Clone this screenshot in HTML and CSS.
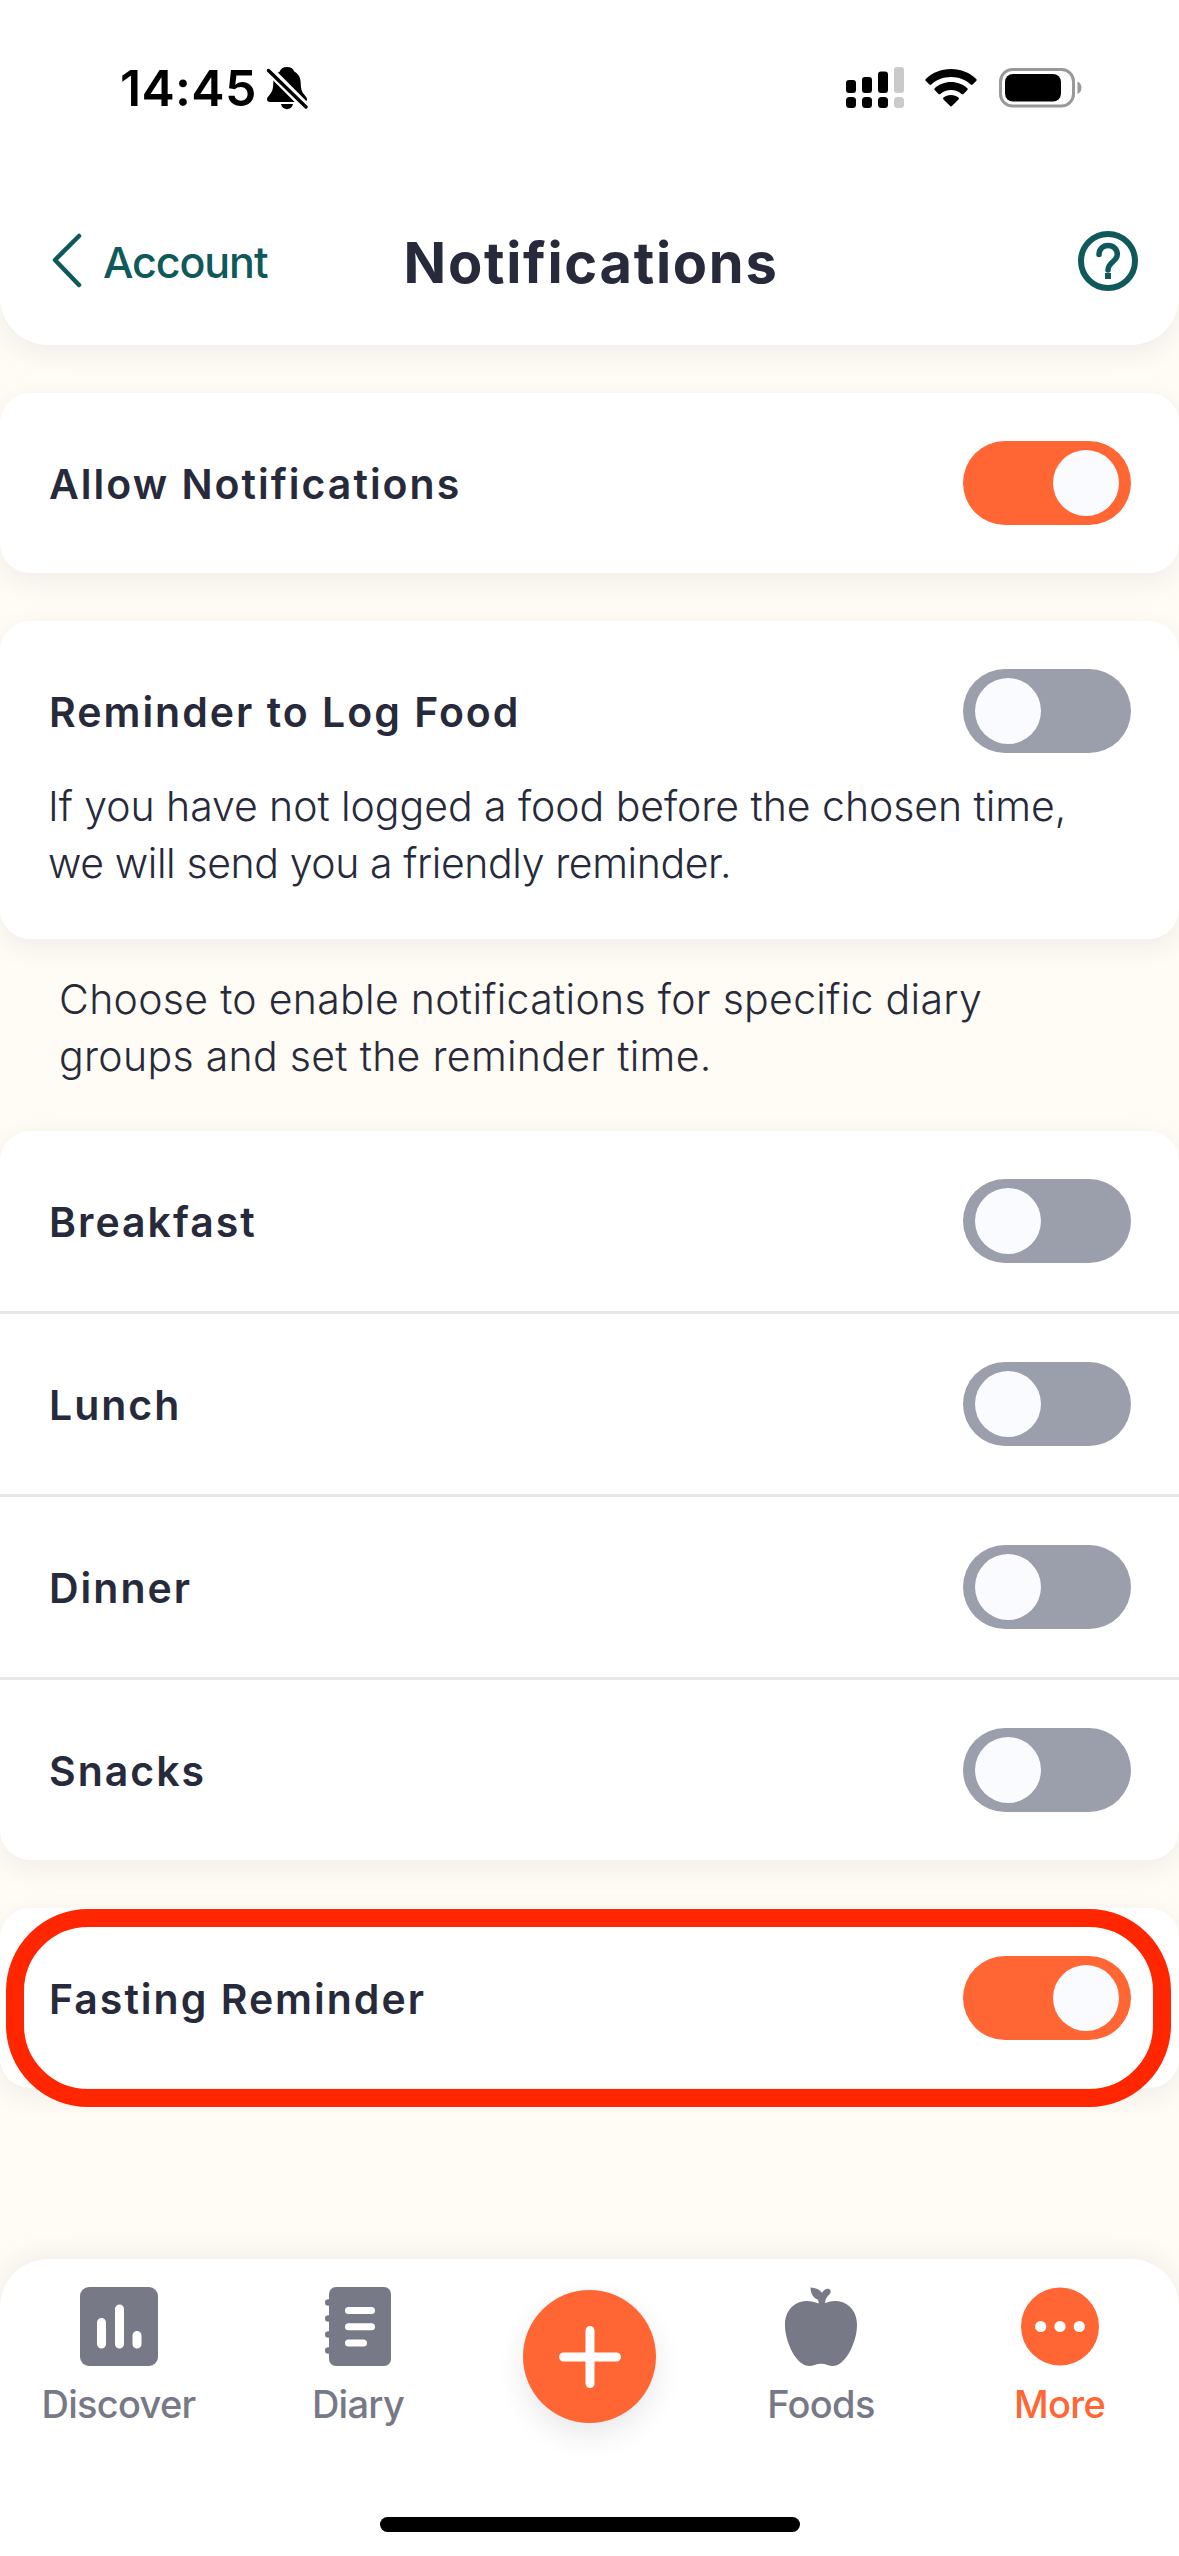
FILE: index.html
```html
<!DOCTYPE html>
<html lang="en">
<head>
  <meta charset="UTF-8">
  <meta name="viewport" content="width=device-width, initial-scale=1.0">
  <title>Notifications</title>
  <link rel="stylesheet" href="styles.css">
</head>
<body>
  <header class="header">
    <div class="status-bar">
      <div class="status-left">
        <span class="time">14:45</span>
        <svg width="42" height="44" viewBox="0 0 42 44">
          <path d="M21 1c-4 0-6.500 2-7.200 4.500C9 8 7.500 12 7.300 17c-.2 6-1 8.500-3.500 11.500C2.200 30.500 1 31.800 1 33.200 1 35 2.200 36 4 36h34c1.800 0 3-1 3-2.800 0-1.400-1.200-2.700-2.800-4.700-2.500-3-3.300-5.500-3.500-11.500C34.500 12 33 8 28.200 5.500 27.500 3 25 1 21 1z"/>
          <path d="M15 38h12c-.6 3.200-2.900 5.200-6 5.200s-5.400-2-6-5.200z"/>
          <path d="M3 4l37 37" stroke="#fff" stroke-width="9"/>
          <path d="M2.500 4.500L40 41" stroke="#000" stroke-width="3.400" stroke-linecap="round"/>
        </svg>
      </div>
      <div class="status-right">
        <svg width="58" height="42" viewBox="0 0 58 42">
          <rect x="0" y="13" width="10" height="13" rx="3"/>
          <rect x="16" y="10" width="10" height="16" rx="3"/>
          <rect x="32" y="4.500" width="10" height="21.500" rx="3"/>
          <rect x="0" y="30" width="10" height="11" rx="3.500"/>
          <rect x="16" y="30" width="10" height="11" rx="3.500"/>
          <rect x="32" y="30" width="10" height="11" rx="3.500"/>
          <g fill="#cacaca">
            <rect x="48" y="0" width="10" height="26" rx="3"/>
            <rect x="48" y="30" width="10" height="11" rx="3.500"/>
          </g>
        </svg>
        <svg class="wifi" width="52" height="38" viewBox="0 0 52 38">
          <path d="M26 0c10 0 18.800 3.800 25.200 10 .6.600.6 1.300 0 1.900l-3.600 3.600c-.6.600-1.300.5-1.900 0C40.500 10.700 33.600 8 26 8S11.500 10.700 6.300 15.500c-.6.500-1.300.6-1.900 0L.8 11.900c-.6-.6-.6-1.300 0-1.900C7.200 3.800 16 0 26 0z"/>
          <path d="M26 13c6.300 0 12 2.300 16.300 6.200.6.600.6 1.300 0 1.900l-3.800 3.800c-.6.600-1.300.5-1.900 0-2.900-2.400-6.500-3.900-10.600-3.900s-7.700 1.500-10.600 3.900c-.6.500-1.300.6-1.900 0l-3.800-3.800c-.6-.6-.6-1.300 0-1.900C14 15.300 19.700 13 26 13z"/>
          <path d="M26 26c2.900 0 5.500 1 7.500 2.600.6.500.6 1.200 0 1.800l-6.600 6.700c-.6.600-1.200.6-1.800 0l-6.600-6.700c-.6-.6-.6-1.300 0-1.800C20.500 27 23.100 26 26 26z"/>
        </svg>
        <svg width="83" height="40" viewBox="0 0 83 40">
          <rect x="1.500" y="1.500" width="73" height="36.500" rx="12" fill="none" stroke="#999" stroke-width="3"/>
          <rect x="6" y="6" width="56" height="27.500" rx="8"/>
          <path d="M78.500 13.500c2.500 1.200 4 3.400 4 6.300s-1.500 5.100-4 6.300z" fill="#999"/>
        </svg>
      </div>
    </div>
    <div class="nav-bar">
      <a class="back">
        <svg width="32" height="58" viewBox="0 0 32 58">
          <path d="M28 6L4 30l24 25" fill="none" stroke="#10595a" stroke-width="4.500" stroke-linecap="round" stroke-linejoin="round"/>
        </svg>
        <span>Account</span>
      </a>
      <h1>Notifications</h1>
      <svg class="help" width="60" height="60" viewBox="0 0 60 60" fill="none" stroke="#10595a">
        <circle cx="30" cy="30" r="27" stroke-width="6"/>
        <path d="M21 23.500c0-5 3.600-9 9-9s9.300 3.700 9.300 8.700C39.300 30.500 30 31 30 39" stroke-width="5.500" stroke-linecap="round"/>
        <path d="M27 45h6" stroke-width="6"/>
      </svg>
    </div>
  </header>

  <main>
    <section class="card">
      <div class="row">
        <span class="label">Allow Notifications</span>
        <span class="toggle on"></span>
      </div>
    </section>

    <section class="card">
      <div class="row">
        <span class="label">Reminder to Log Food</span>
        <span class="toggle"></span>
      </div>
      <p class="description">If you have not logged a food before the chosen time,<br><span class="tight">we will send you a friendly reminder.</span></p>
    </section>

    <p class="note">Choose to enable notifications for specific diary<br>groups and set the reminder time.</p>

    <section class="card list">
      <div class="row">
        <span class="label">Breakfast</span>
        <span class="toggle"></span>
      </div>
      <div class="row">
        <span class="label">Lunch</span>
        <span class="toggle"></span>
      </div>
      <div class="row">
        <span class="label">Dinner</span>
        <span class="toggle"></span>
      </div>
      <div class="row">
        <span class="label">Snacks</span>
        <span class="toggle"></span>
      </div>
    </section>

    <section class="card highlighted">
      <div class="row">
        <span class="label">Fasting Reminder</span>
        <span class="toggle on"></span>
      </div>
    </section>
  </main>

  <nav class="tab-bar">
    <div class="tabs">
      <a class="tab">
        <svg width="78" height="79" viewBox="0 0 78 79">
          <rect width="78" height="79" rx="9" fill="#777986"/>
          <path d="M21.500 35.500v21.500M39.500 22v35M57 48.500v8.500" stroke="#fff" stroke-width="9" stroke-linecap="round"/>
        </svg>
        <span>Discover</span>
      </a>
      <a class="tab">
        <svg width="66" height="79" viewBox="0 0 66 79">
          <rect x="4" width="62" height="79" rx="7" fill="#777986"/>
          <g fill="#777986">
            <circle cx="3.300" cy="15.500" r="3.300"/>
            <circle cx="3.300" cy="31.500" r="3.300"/>
            <circle cx="3.300" cy="47.500" r="3.300"/>
            <circle cx="3.300" cy="63.500" r="3.300"/>
          </g>
          <path d="M23.500 23.500h23M23.500 39.700h23M23.500 56h15" stroke="#fff" stroke-width="7" stroke-linecap="round"/>
        </svg>
        <span>Diary</span>
      </a>
      <a class="add">
        <svg width="62" height="62" viewBox="0 0 62 62">
          <path d="M31 4.500v53M4.500 31h53" stroke="#fff" stroke-width="9" stroke-linecap="round"/>
        </svg>
      </a>
      <a class="tab">
        <svg width="72" height="79" viewBox="0 0 72 79">
          <path fill="#777986" d="M33.500 16.500c.2-2.500-.2-3.600-2-4.500C27.500 10 25.500 5 25.500.4c5 .2 9.500 2 11.500 5.400C39 2.500 42 1.200 44 2c2.200 1 2.200 3.500.5 5.200-3 3-4.500 5-4.300 9C44 14.500 47.500 13.800 51 14c13 .8 21 10.500 21 24 0 14-7.500 32-17 38.500-4.500 3-8.500 3-12.500 1.500-4.500-1.600-8.500-1.600-13 0-4 1.500-8 1.500-12.500-1.500C7.500 70 0 52 0 38 0 24.500 8 14.800 21 14c4.500-.2 8.500.8 12.500 2.500z"/>
        </svg>
        <span>Foods</span>
      </a>
      <a class="tab active">
        <svg width="78" height="79" viewBox="0 0 78 79">
          <circle cx="39" cy="39.500" r="39" fill="#ff6633"/>
          <g fill="#fff">
            <circle cx="19.700" cy="39.500" r="5.600"/>
            <circle cx="39" cy="39.500" r="5.600"/>
            <circle cx="58.300" cy="39.500" r="5.600"/>
          </g>
        </svg>
        <span>More</span>
      </a>
    </div>
    <div class="home-indicator"></div>
  </nav>
</body>
</html>
```
FILE: styles.css
```css
:root {
  --color-orange: #ff6633;
  --color-teal: #10595a;
  --color-text: #272a3a;
  --color-gray: #777986;
  --color-background: #fffbf5;
  --shadow: 0 8px 28px rgba(39, 42, 58, 0.07);
}

*,
*::before,
*::after {
  box-sizing: border-box;
}

body {
  display: flex;
  flex-direction: column;
  width: 1179px;
  height: 2556px;
  margin: 0;
  overflow: hidden;
  font-family: Inter, "Liberation Sans", sans-serif;
  background-color: var(--color-background);
  color: var(--color-text);
}

svg {
  display: block;
  flex: none;
}

/* Header */
.header {
  height: 345px;
  background: white;
  border-radius: 0 0 48px 48px;
  box-shadow: var(--shadow);
}

.status-bar {
  display: flex;
  justify-content: space-between;
  align-items: center;
  height: 176px;
  padding: 0 97px 0 120px;
  color: black;
}

.status-left,
.status-right {
  display: flex;
  align-items: center;
}

.time {
  width: 146px;
  font-size: 50px;
  font-weight: 600;
  letter-spacing: 0.3px;
}

.wifi {
  margin: 0 22px 0 21px;
}

.nav-bar {
  display: grid;
  grid-template-columns: 1fr auto 1fr;
  align-items: center;
  height: 169px;
  padding: 0 41px 0 51px;
}

.back {
  display: flex;
  align-items: center;
  gap: 20px;
  color: var(--color-teal);
  font-size: 43px;
  font-weight: 500;
  letter-spacing: -1.1px;
}

.back svg {
  margin-top: -4px;
}

.back span {
  padding-top: 3px;
}

h1 {
  margin: 5px 7px 0 0;
  font-size: 56px;
  font-weight: 700;
  letter-spacing: 1.7px;
}

.help {
  justify-self: end;
}

/* Cards */
main {
  flex: 1;
  padding-top: 48px;
}

.card {
  margin-bottom: 48px;
  background: white;
  border-radius: 30px;
  box-shadow: var(--shadow);
}

.row {
  display: flex;
  justify-content: space-between;
  align-items: center;
  height: 180px;
  padding: 0 48px;
}

.label {
  padding: 1px 0 0 1px;
  font-size: 41px;
  font-weight: 600;
  letter-spacing: 2px;
}

.toggle {
  display: flex;
  align-items: center;
  width: 168px;
  height: 84px;
  padding: 0 12px;
  border-radius: 42px;
  background-color: #9b9eab;
}

.toggle::before {
  content: "";
  width: 66px;
  height: 66px;
  border-radius: 50%;
  background-color: #fafbff;
}

.toggle.on {
  justify-content: flex-end;
  background-color: var(--color-orange);
}

.description,
.note {
  margin: 0;
  font-size: 41px;
  font-weight: 300;
  line-height: 57px;
}

.description {
  margin-top: -23px;
  padding: 0 48px 47px;
  letter-spacing: -0.05px;
}

.tight {
  letter-spacing: -0.4px;
}

.note {
  margin-top: -16px;
  padding: 0 59px 46px;
  letter-spacing: 0.3px;
}

.list .row + .row {
  height: 183px;
  border-top: 3px solid #e6e7e9;
}

.highlighted {
  position: relative;
}

.highlighted::after {
  content: "";
  position: absolute;
  top: 1px;
  left: 6px;
  right: 8px;
  height: 198px;
  border: 18px solid #ff2600;
  border-radius: 82px;
}

/* Bottom tabs */
.tab-bar {
  height: 297px;
  background: white;
  border-radius: 48px 48px 0 0;
  box-shadow: 0 -4px 28px rgba(39, 42, 58, 0.07);
}

.tabs {
  display: grid;
  grid-template-columns: 237px 242px 221px 242px 235px;
  justify-items: center;
  height: 258px;
  padding-top: 28px;
}

.tab {
  display: flex;
  flex-direction: column;
  align-items: center;
  gap: 15px;
  color: var(--color-gray);
  font-size: 38px;
  font-weight: 500;
  letter-spacing: -0.7px;
}

.active {
  color: var(--color-orange);
}

.add {
  display: flex;
  justify-content: center;
  align-items: center;
  width: 133px;
  height: 133px;
  margin-top: 3px;
  border-radius: 50%;
  background-color: var(--color-orange);
  box-shadow: 0 12px 28px rgba(39, 42, 58, 0.1);
}

.home-indicator {
  width: 420px;
  height: 15px;
  margin: 0 auto;
  border-radius: 8px;
  background: black;
}
```
